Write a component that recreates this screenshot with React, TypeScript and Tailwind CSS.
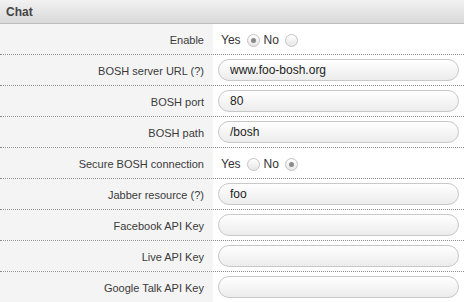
import React from "react";

type Row =
  | { label: string; kind: "radio"; yes: boolean }
  | { label: string; kind: "input"; value: string };

const rows: Row[] = [
  { label: "Enable", kind: "radio", yes: true },
  { label: "BOSH server URL (?)", kind: "input", value: "www.foo-bosh.org" },
  { label: "BOSH port", kind: "input", value: "80" },
  { label: "BOSH path", kind: "input", value: "/bosh" },
  { label: "Secure BOSH connection", kind: "radio", yes: false },
  { label: "Jabber resource (?)", kind: "input", value: "foo" },
  { label: "Facebook API Key", kind: "input", value: "" },
  { label: "Live API Key", kind: "input", value: "" },
  { label: "Google Talk API Key", kind: "input", value: "" },
];

function Radio({ checked }: { checked: boolean }) {
  return (
    <span className="inline-flex h-[13px] w-[13px] items-center justify-center rounded-full border border-[#c4c4c4] bg-gradient-to-b from-[#ffffff] to-[#e6e6e6]">
      {checked && <span className="h-[5px] w-[5px] rounded-full bg-[#8a8a8a]" />}
    </span>
  );
}

export default function App() {
  return (
    <div
      className="w-[464px] h-[302px] overflow-hidden bg-white text-[#333]"
      style={{ fontFamily: '"Liberation Sans", Arial, sans-serif' }}
    >
      <div className="h-[24px] border-b border-[#bdbdbd] bg-gradient-to-b from-[#f2f2f2] to-[#d9d9d9] pl-[6px] flex items-center text-[12px] font-bold text-[#444]">
        Chat
      </div>
      {rows.map((r, i) => (
        <div key={i} className="grid grid-cols-[213px_1fr] h-[31px] border-b border-dotted border-[#8c8c8c]">
          <div className="bg-[#f4f4f4] flex items-center justify-end pr-[9px] pt-[2px] text-[11px] text-[#3a3a3a]">
            {r.label}
          </div>
          <div className="flex items-center pl-[5px] pr-[5px]">
            {r.kind === "radio" ? (
              <div className="flex items-center pl-[3px] pt-[2px] text-[12px] text-[#333]">
                <span>Yes</span>
                <span className="ml-[6px] flex"><Radio checked={r.yes} /></span>
                <span className="ml-[4px]">No</span>
                <span className="ml-[6px] flex"><Radio checked={!r.yes} /></span>
              </div>
            ) : (
              <div className="h-[22px] w-full rounded-full border border-[#c8c8c8] bg-gradient-to-b from-[#ffffff] to-[#ececec] flex items-center pl-[11px] text-[12px] text-[#222]">
                {r.value}
              </div>
            )}
          </div>
        </div>
      ))}
    </div>
  );
}
